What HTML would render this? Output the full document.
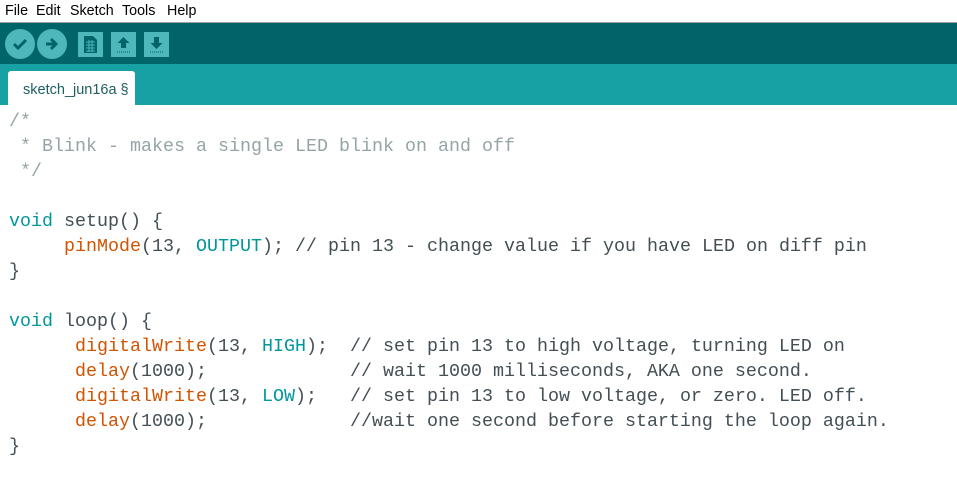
<!DOCTYPE html><html><head><style>
body{margin:0;width:957px;height:483px;background:#fff;overflow:hidden;position:relative;font-family:"Liberation Sans",sans-serif}
#menu{position:absolute;top:0;left:0;right:0;height:22px;font-size:14.3px;color:#000}
#menu span{position:absolute;top:3px}
#sep{position:absolute;top:22px;left:0;right:0;height:1px;background:#a0a0a0}
#tb{position:absolute;top:23px;left:0;right:0;height:41px;background:#006468}
#tabs{position:absolute;top:64px;left:0;right:0;height:41px;background:#17a1a5}
#tab{position:absolute;left:8px;top:7px;width:127px;height:34px;background:#fff;border-radius:3px 3px 0 0;color:#1d5f63;font-size:14.5px;line-height:38px;text-indent:15px}
.c{position:absolute;top:6px;width:30px;height:30px;border-radius:50%;background:#4db7bb}
.s{position:absolute;top:9px;width:25px;height:25px;background:#4db7bb}
pre{position:absolute;left:9px;top:109px;margin:0;font-family:"Liberation Mono",monospace;font-size:18.33px;line-height:25px;color:#434f54}
.k{color:#00979c}.f{color:#d35400}.m{color:#95a5a6}
</style></head><body>
<div id="menu"><span style="left:5px">File</span><span style="left:36px">Edit</span><span style="left:70px">Sketch</span><span style="left:122px">Tools</span><span style="left:167px">Help</span></div>
<div id="sep"></div>
<div id="tb">
<div class="c" style="left:5px"><svg width="30" height="30"><path d="M9 15l4 4 8-8" stroke="#006468" stroke-width="3" fill="none"/></svg></div>
<div class="c" style="left:37px"><svg width="30" height="30"><path d="M9 15h10M14 10l5 5-5 5" stroke="#006468" stroke-width="3" fill="none"/></svg></div>
<div class="s" style="left:78px"><svg width="25" height="25"><path d="M6 4h9l4 4v13H6z" fill="#006468"/><path d="M8 10h9M8 13h9M8 16h9M8 19h9M11 8v12M14 8v12" stroke="#4db7bb" stroke-width="1"/></svg></div>
<div class="s" style="left:111px"><svg width="25" height="25"><path d="M12.5 5l6 6h-3.5v5h-5v-5H6.5z" fill="#006468"/><path d="M6 20h13" stroke="#006468" stroke-dasharray="1 1"/></svg></div>
<div class="s" style="left:144px"><svg width="25" height="25"><path d="M12.5 17l6-6h-3.5V5h-5v6H6.5z" fill="#006468"/><path d="M6 20h13" stroke="#006468" stroke-dasharray="1 1"/></svg></div>
</div>
<div id="tabs"><div id="tab">sketch_jun16a §</div></div>
<pre><span class="m">/*
 * Blink - makes a single LED blink on and off
 */</span>

<span class="k">void</span> setup() {
     <span class="f">pinMode</span>(13, <span class="k">OUTPUT</span>); // pin 13 - change value if you have LED on diff pin
}

<span class="k">void</span> loop() {
      <span class="f">digitalWrite</span>(13, <span class="k">HIGH</span>);  // set pin 13 to high voltage, turning LED on
      <span class="f">delay</span>(1000);             // wait 1000 milliseconds, AKA one second.
      <span class="f">digitalWrite</span>(13, <span class="k">LOW</span>);   // set pin 13 to low voltage, or zero. LED off.
      <span class="f">delay</span>(1000);             //wait one second before starting the loop again.
}</pre>
</body></html>
